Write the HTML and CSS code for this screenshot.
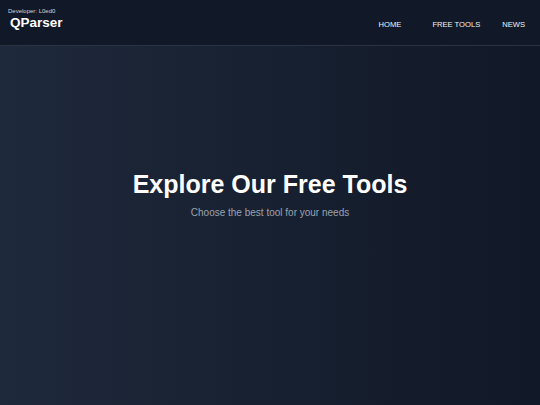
FILE: index.html
```html
<!DOCTYPE html>
<html>
<head>
<meta charset="utf-8">
<link rel="stylesheet" href="styles.css">
</head>
<body>
<header class="header">
  <div class="brand">
    <div class="dev">Developer: L0ed0</div>
    <div class="logo">QParser</div>
  </div>
  <nav class="nav">
    <a class="nav-link home">HOME</a>
    <a class="nav-link tools">FREE TOOLS</a>
    <a class="nav-link news">NEWS</a>
  </nav>
</header>
<main class="hero">
  <h1 class="title">Explore Our Free Tools</h1>
  <p class="subtitle">Choose the best tool for your needs</p>
</main>
</body>
</html>
```
FILE: styles.css
```css
* { box-sizing: border-box; }
html, body { margin: 0; padding: 0; height: 100%; }
body {
  font-family: "Liberation Sans", Arial, sans-serif;
  background: linear-gradient(90deg, #1e293b 0%, #111827 100%);
  color: #fff;
  display: flex;
  flex-direction: column;
}
.header {
  height: 46px;
  background: #111827;
  border-bottom: 1px solid #2a3342;
  display: flex;
  align-items: center;
  justify-content: space-between;
  padding: 0 15px 0 8px;
}
.brand { display: flex; flex-direction: column; margin-top: -8px; }
.dev { font-size: 6px; color: #d1d5db; line-height: 8px; }
.logo { font-size: 13.5px; font-weight: 700; line-height: 16px; margin-left: 2px; }
.nav { display: flex; align-items: center; margin-top: 3px; }
.nav-link { font-size: 7.6px; color: #f3f4f6; text-decoration: none; }
.tools { margin-left: 31px; }
.news { margin-left: 22px; }
.hero {
  flex: 1;
  display: flex;
  flex-direction: column;
  align-items: center;
  padding-top: 124px;
}
.title { margin: 0; font-size: 25px; font-weight: 700; line-height: 29px; }
.subtitle { margin: 7px 0 0; font-size: 10px; color: #9ca3af; line-height: 13px; }
```
